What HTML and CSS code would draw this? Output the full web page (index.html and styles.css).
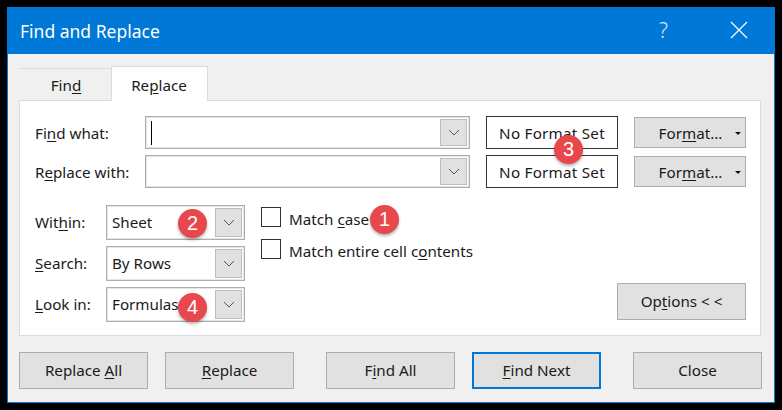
FILE: index.html
```html
<!DOCTYPE html>
<html lang="en">
<head>
<meta charset="utf-8">
<title>Find and Replace</title>
<link rel="stylesheet" href="styles.css">
</head>
<body>
<div class="dialog">
  <header class="titlebar">
    <span class="title">Find and Replace</span>
    <span class="help">?</span>
    <svg class="close" width="18" height="18" viewBox="0 0 18 18"><path d="M1 1L17 17M17 1L1 17" stroke="#fff" stroke-width="1.2" fill="none"/></svg>
  </header>
  <div class="content">
    <nav class="tabs">
      <div class="tab"><span>Fin<u>d</u></span></div>
      <div class="tab active"><span>Re<u>p</u>lace</span></div>
    </nav>
    <section class="panel">
      <div class="find-grid">
        <label class="lbl">Fi<u>n</u>d what:</label>
        <div class="combo wide">
          <span class="value"><span class="caret"></span></span>
          <span class="drop"><svg width="12" height="7" viewBox="0 0 12 7"><path d="M1 1L6 6L11 1" stroke="#555" fill="none"/></svg></span>
        </div>
        <div class="noformat">No Format Set</div>
        <div class="btn format"><span>For<u>m</u>at...</span><i class="tri"></i></div>
        <label class="lbl">R<u>e</u>place with:</label>
        <div class="combo wide">
          <span class="value"></span>
          <span class="drop"><svg width="12" height="7" viewBox="0 0 12 7"><path d="M1 1L6 6L11 1" stroke="#555" fill="none"/></svg></span>
        </div>
        <div class="noformat">No Format Set</div>
        <div class="btn format"><span>For<u>m</u>at...</span><i class="tri"></i></div>
      </div>
      <div class="lower">
        <div class="scope-grid">
          <label class="lbl">Wit<u>h</u>in:</label>
          <div class="combo">
            <span class="value">Sheet</span>
            <span class="drop"><svg width="12" height="7" viewBox="0 0 12 7"><path d="M1 1L6 6L11 1" stroke="#555" fill="none"/></svg></span>
          </div>
          <label class="lbl"><u>S</u>earch:</label>
          <div class="combo">
            <span class="value">By Rows</span>
            <span class="drop"><svg width="12" height="7" viewBox="0 0 12 7"><path d="M1 1L6 6L11 1" stroke="#555" fill="none"/></svg></span>
          </div>
          <label class="lbl"><u>L</u>ook in:</label>
          <div class="combo">
            <span class="value">Formulas</span>
            <span class="drop"><svg width="12" height="7" viewBox="0 0 12 7"><path d="M1 1L6 6L11 1" stroke="#555" fill="none"/></svg></span>
          </div>
        </div>
        <div class="checks">
          <div class="check"><span class="box"></span><span class="check-text">Match <u>c</u>ase</span></div>
          <div class="check"><span class="box"></span><span class="check-text">Match entire cell c<u>o</u>ntents</span></div>
        </div>
        <div class="btn options"><span>Op<u>t</u>ions &lt; &lt;</span></div>
      </div>
    </section>
    <footer class="actions">
      <div class="group">
        <div class="btn action"><span>Replace <u>A</u>ll</span></div>
        <div class="btn action"><span><u>R</u>eplace</span></div>
      </div>
      <div class="group">
        <div class="btn action"><span>F<u>i</u>nd All</span></div>
        <div class="btn action primary"><span><u>F</u>ind Next</span></div>
      </div>
      <div class="btn action"><span>Close</span></div>
    </footer>
  </div>
  <span class="badge b1">1</span>
  <span class="badge b2">2</span>
  <span class="badge b3">3</span>
  <span class="badge b4">4</span>
</div>
</body>
</html>
```
FILE: styles.css
```css
* { box-sizing: border-box; }
html, body { margin: 0; height: 100%; background: #000; overflow: hidden; }
body { font-family: "Noto Sans", "Open Sans", sans-serif; font-size: 15.2px; color: #1a1a1a; }
u { text-underline-offset: 2px; text-decoration-thickness: 1px; }

.dialog {
  position: relative;
  margin: 7px 0 0 7px;
  width: 768px;
  height: 396px;
  border: 1px solid #0078d7;
  border-top: 0;
  background: #f0f0f0;
  display: flex;
  flex-direction: column;
}
.titlebar {
  height: 47px;
  flex: none;
  margin: 0 -1px;
  background: #0078d7;
  color: #fff;
  display: flex;
  align-items: center;
  padding: 0 27px 0 13px;
}
.title { font-size: 17.5px; flex: 1; }
.help { font-size: 21px; margin-right: 62px; font-weight: 300; margin-top: -2px; color: #dbeaf8; }
.close { margin-top: -1px; }

.content { flex: 1; padding: 12px 12px 0 11px; display: flex; flex-direction: column; }
.tabs { display: flex; height: 34px; align-items: flex-end; }
.tab {
  width: 92px;
  height: 32px;
  display: flex;
  align-items: center;
  justify-content: center;
  border-top: 1px solid #dcdcdc;
  padding: 1px 0 0 2px;
}
.tab.active {
  width: 97px;
  height: 35px;
  margin-bottom: -1px;
  background: #fff;
  border: 1px solid #dcdcdc;
  border-bottom: 0;
  position: relative;
  z-index: 1;
  padding: 1px 1px 0 0;
}
.panel {
  height: 236px;
  margin-right: 1px;
  border: 1px solid #dcdcdc;
  background: #fff;
  padding: 15px 14px 0 15px;
}
.find-grid {
  display: grid;
  grid-template-columns: 110px 341px 148px 112px;
  grid-auto-rows: 33px;
  row-gap: 6px;
  align-items: center;
}
.lbl { white-space: nowrap; }
.combo {
  height: 33px;
  display: flex;
  align-items: stretch;
  border: 1px solid #adadad;
  box-shadow: inset 0 0 0 1px #e6e6e6;
  background: #fff;
  padding: 2px;
}
.combo.wide { width: 325px; }
.value { flex: 1; padding-left: 3px; display: flex; align-items: center; white-space: nowrap; }
.caret { width: 1px; height: 24px; background: #000; }
.drop {
  width: 27px;
  flex: none;
  background: #e1e1e1;
  border: 1px solid #bdbdbd;
  display: flex;
  align-items: center;
  justify-content: center;
}
.noformat {
  width: 132px;
  height: 33px;
  border: 1px solid #333;
  display: flex;
  align-items: center;
  justify-content: center;
  white-space: nowrap;
  letter-spacing: .25px;
}
.btn {
  background: #e1e1e1;
  border: 1px solid #adadad;
  display: flex;
  align-items: center;
  justify-content: center;
  white-space: nowrap;
}
.format {
  width: 112px;
  height: 31px;
  position: relative;
  padding-left: 1px;
}
.tri {
  position: absolute;
  right: 4px;
  top: 14px;
  border: 3px solid transparent;
  border-top: 3px solid #111;
  border-bottom: 0;
}
.lower { display: flex; margin-top: 17px; height: 116px; }
.scope-grid {
  display: grid;
  grid-template-columns: 71px 139px;
  grid-auto-rows: 35px;
  row-gap: 6px;
  align-items: center;
  align-self: flex-start;
}
.scope-grid .combo { height: 35px; }
.scope-grid .value, .scope-grid .lbl { padding-bottom: 2px; }
.checks { margin-left: 16px; padding-top: 2px; display: flex; flex-direction: column; gap: 12px; }
.check { display: flex; align-items: center; gap: 8px; height: 20px; white-space: nowrap; }
.check-text { margin-top: 4px; }
.box { width: 20px; height: 20px; border: 1px solid #333; background: #fff; flex: none; }
.options {
  width: 129px;
  height: 37px;
  margin-left: auto;
  align-self: flex-end;
  margin-bottom: 1px;
  padding-bottom: 2px;
}
.actions {
  margin-top: 16px;
  display: flex;
  justify-content: space-between;
}
.group { display: flex; gap: 17px; }
.action { width: 129px; height: 37px; padding-bottom: 2px; }
.primary { border: 2px solid #0078d7; }

.badge {
  position: absolute;
  width: 29px;
  height: 29px;
  border-radius: 50%;
  background: #e8474c;
  color: #fff;
  font-size: 20px;
  font-family: "Liberation Sans", sans-serif;
  display: flex;
  align-items: center;
  justify-content: center;
  box-shadow: 0 2px 3px rgba(0,0,0,.3);
}
.b1 { left: 362px; top: 198px; }
.b2 { left: 170px; top: 202px; }
.b3 { left: 546px; top: 128px; }
.b4 { left: 170px; top: 286px; }
```
